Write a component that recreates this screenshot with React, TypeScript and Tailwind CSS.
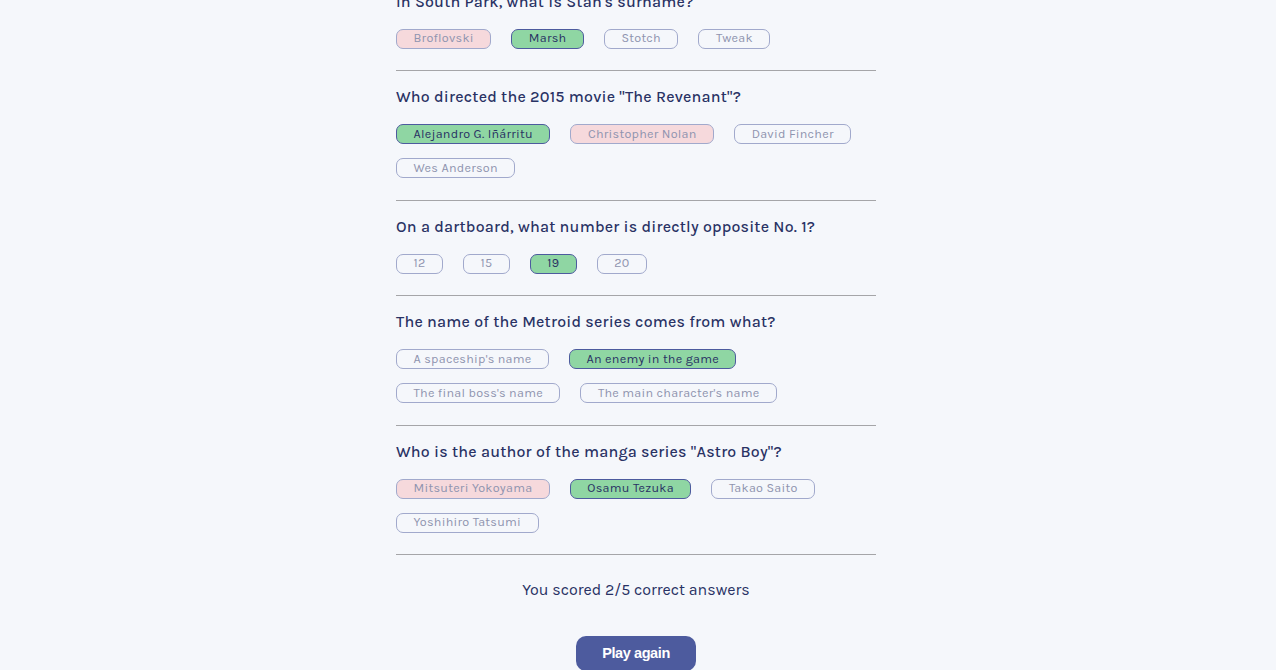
type Answer = { text: string; state: "idle" | "correct" | "wrong" };

const questions: { q: string; answers: Answer[] }[] = [
  {
    q: "In South Park, what is Stan's surname?",
    answers: [
      { text: "Broflovski", state: "wrong" },
      { text: "Marsh", state: "correct" },
      { text: "Stotch", state: "idle" },
      { text: "Tweak", state: "idle" },
    ],
  },
  {
    q: 'Who directed the 2015 movie "The Revenant"?',
    answers: [
      { text: "Alejandro G. Iñárritu", state: "correct" },
      { text: "Christopher Nolan", state: "wrong" },
      { text: "David Fincher", state: "idle" },
      { text: "Wes Anderson", state: "idle" },
    ],
  },
  {
    q: "On a dartboard, what number is directly opposite No. 1?",
    answers: [
      { text: "12", state: "idle" },
      { text: "15", state: "idle" },
      { text: "19", state: "correct" },
      { text: "20", state: "idle" },
    ],
  },
  {
    q: "The name of the Metroid series comes from what?",
    answers: [
      { text: "A spaceship's name", state: "idle" },
      { text: "An enemy in the game", state: "correct" },
      { text: "The final boss's name", state: "idle" },
      { text: "The main character's name", state: "idle" },
    ],
  },
  {
    q: 'Who is the author of the manga series "Astro Boy"?',
    answers: [
      { text: "Mitsuteri Yokoyama", state: "wrong" },
      { text: "Osamu Tezuka", state: "correct" },
      { text: "Takao Saito", state: "idle" },
      { text: "Yoshihiro Tatsumi", state: "idle" },
    ],
  },
];

function AnswerPill({ a }: { a: Answer }) {
  const styles =
    a.state === "correct"
      ? "bg-[#8fd6a3] border-[#4d5b9e] text-[#293264]"
      : a.state === "wrong"
      ? "bg-[#f6d9dc] border-[#a1a9cc] text-[#8f94af]"
      : "bg-transparent border-[#a1a9cc] text-[#8f94af]";
  return (
    <div className={`h-[20px] px-[16.5px] flex items-center rounded-[7px] border text-[12.6px] tracking-[0.25px] leading-none ${styles}`}>
      {a.text}
    </div>
  );
}

export default function App() {
  return (
    <div className="w-full h-[670px] overflow-hidden bg-[#f5f7fb] font-['Karla','Inter',sans-serif]">
      <div className="w-[480px] ml-[396px] -mt-[8.5px]">
        {questions.map((item, i) => (
          <div key={i} className={i === 0 ? "" : "border-t border-[#a5a5a8] pt-[16px]"}>
            <h2 className="h-[20px] leading-[20px] text-[16px] font-medium tracking-[0.2px] text-[#293264]">
              {item.q}
            </h2>
            <div className="mt-[17px] pb-[21.5px] flex flex-wrap gap-x-[20px] gap-y-[14px]">
              {item.answers.map((a) => (
                <AnswerPill key={a.text} a={a} />
              ))}
            </div>
          </div>
        ))}
        <div className="border-t border-[#a5a5a8]" />
        <p className="mt-[25px] h-[20px] leading-[20px] text-center text-[16px] text-[#293264]">
          You scored 2/5 correct answers
        </p>
        <div className="mt-[36px] flex justify-center">
          <button className="w-[120px] h-[35px] rounded-[10px] bg-[#4d5b9e] text-white text-[14.5px] font-semibold font-['Liberation_Sans',Arial,sans-serif] tracking-[-0.4px]">
            Play again
          </button>
        </div>
      </div>
    </div>
  );
}
